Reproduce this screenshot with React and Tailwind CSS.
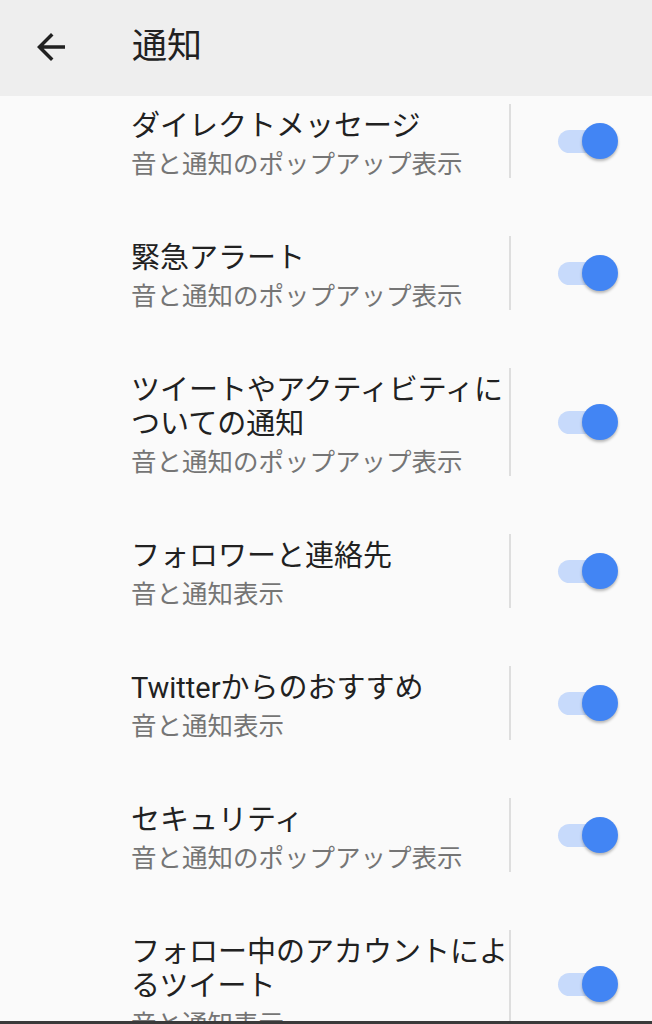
import React from "react";

const items = [
  { title: "ダイレクトメッセージ", sub: "音と通知のポップアップ表示" },
  { title: "緊急アラート", sub: "音と通知のポップアップ表示" },
  { title: "ツイートやアクティビティについての通知", sub: "音と通知のポップアップ表示" },
  { title: "フォロワーと連絡先", sub: "音と通知表示" },
  { title: "Twitterからのおすすめ", sub: "音と通知表示" },
  { title: "セキュリティ", sub: "音と通知のポップアップ表示" },
  { title: "フォロー中のアカウントによるツイート", sub: "音と通知表示" },
];

function Toggle() {
  return (
    <div className="flex items-center">
      <div className="w-[50px] h-[23px] rounded-full bg-[#c7dafb]" />
      <div className="-ml-[26px] w-[36px] h-[36px] rounded-full bg-[#4285f4] shadow-[0_2px_3px_rgba(0,0,0,0.28)]" />
    </div>
  );
}

function Row({ title, sub, first }) {
  return (
    <div className={`flex items-stretch pl-[131px] pb-[29px] ${first ? "pt-[8px]" : "pt-[29px]"}`}>
      <div className="w-[378px] flex flex-col pt-[5px]">
        <div className="text-[29px] leading-[34px] text-[#212121]">{title}</div>
        <div className="mt-[7px] text-[25.5px] leading-[28px] text-[#757575] whitespace-nowrap">{sub}</div>
      </div>
      <div className="w-[2px] bg-[#dedede]" />
      <div className="flex-1 flex items-center pl-[47px]">
        <Toggle />
      </div>
    </div>
  );
}

export default function App() {
  return (
    <div className="w-[652px] h-[1024px] flex flex-col overflow-hidden bg-[#fafafa] font-['Roboto','Noto_Sans_CJK_JP',sans-serif]">
      <div className="h-[96px] shrink-0 bg-[#eeeeee] flex items-center">
        <svg viewBox="0 0 24 24" className="w-[42px] h-[42px] ml-[30px] -mt-[2px]" fill="#212121">
          <path d="M20 11H7.83l5.59-5.59L12 4l-8 8 8 8 1.41-1.41L7.83 13H20v-2z" />
        </svg>
        <div className="ml-[60px] text-[35px] leading-none text-[#212121] -mt-[3px]">通知</div>
      </div>
      <div className="flex-1 overflow-hidden">
        {items.map((it, i) => (
          <Row key={i} title={it.title} sub={it.sub} first={i === 0} />
        ))}
      </div>
      <div className="h-[3px] shrink-0 bg-[#3a3a3a]" />
    </div>
  );
}
